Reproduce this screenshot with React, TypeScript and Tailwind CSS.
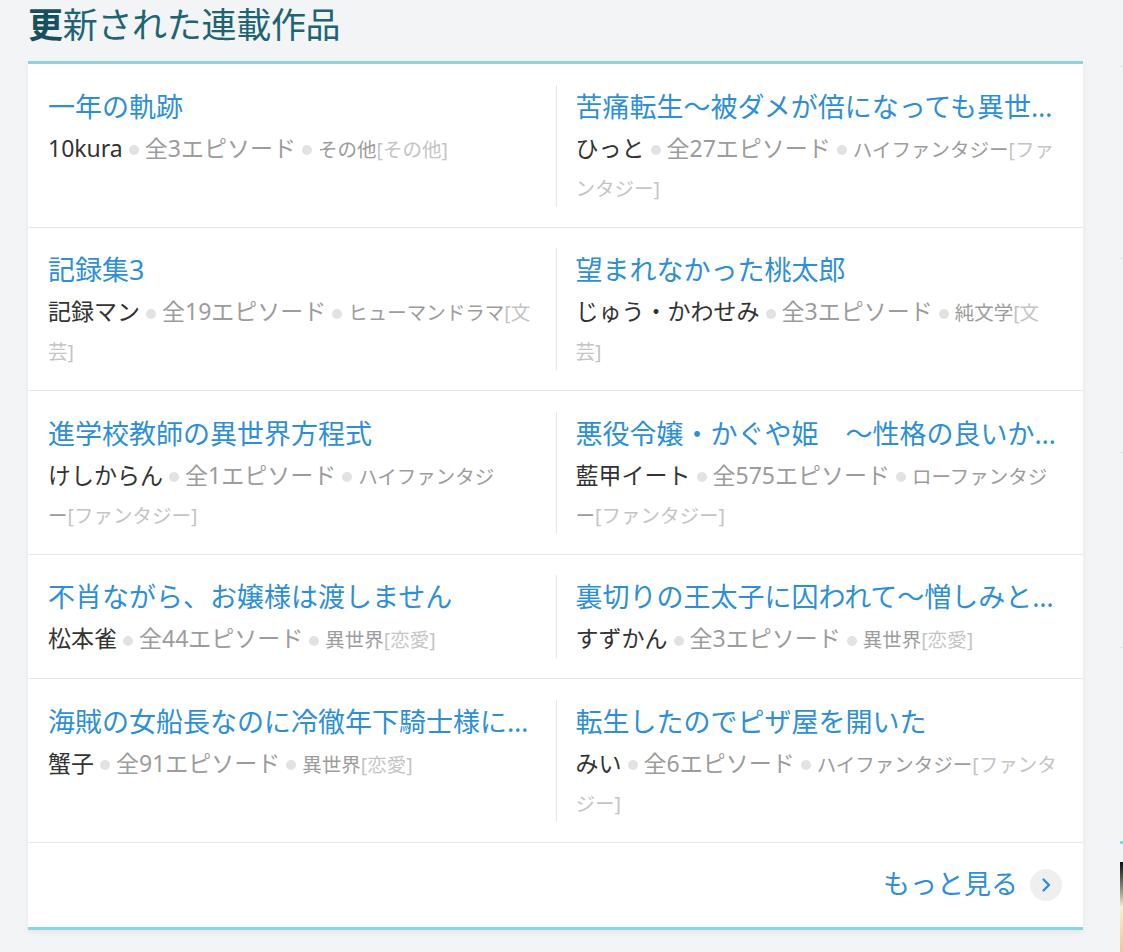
import React from 'react'

type Work = { title: string; author: string; episodes: number; genre: string; category: string }

const works: Work[] = [
  { title: '一年の軌跡', author: '10kura', episodes: 3, genre: 'その他', category: 'その他' },
  { title: '苦痛転生～被ダメが倍になっても異世界で生き抜きます～', author: 'ひっと', episodes: 27, genre: 'ハイファンタジー', category: 'ファンタジー' },
  { title: '記録集3', author: '記録マン', episodes: 19, genre: 'ヒューマンドラマ', category: '文芸' },
  { title: '望まれなかった桃太郎', author: 'じゅう・かわせみ', episodes: 3, genre: '純文学', category: '文芸' },
  { title: '進学校教師の異世界方程式', author: 'けしからん', episodes: 1, genre: 'ハイファンタジー', category: 'ファンタジー' },
  { title: '悪役令嬢・かぐや姫　～性格の良いかぐや姫の物語～', author: '藍甲イート', episodes: 575, genre: 'ローファンタジー', category: 'ファンタジー' },
  { title: '不肖ながら、お嬢様は渡しません', author: '松本雀', episodes: 44, genre: '異世界', category: '恋愛' },
  { title: '裏切りの王太子に囚われて～憎しみと愛の狭間で～', author: 'すずかん', episodes: 3, genre: '異世界', category: '恋愛' },
  { title: '海賊の女船長なのに冷徹年下騎士様に溺愛されています', author: '蟹子', episodes: 91, genre: '異世界', category: '恋愛' },
  { title: '転生したのでピザ屋を開いた', author: 'みい', episodes: 6, genre: 'ハイファンタジー', category: 'ファンタジー' }
]

const Dot = () => <span className="inline-block w-[10px] h-[10px] rounded-full bg-[#e2e2e2] mx-[6px] align-middle" />

function Cell({ w, right }: { w: Work; right?: boolean }) {
  // genre + "[" + category: the last genre char, the bracket and the first category char stay together
  const g = w.genre
  const c = w.category
  return (
    <div className={'flex-1 min-w-0 px-5 ' + (right ? 'border-l border-[#e6e6e6] pl-[19px]' : '')}>
      <div className="text-[27px] leading-[44px] text-[#2e8fd9] truncate">{w.title}</div>
      <div className="text-[23px] leading-[39px] break-all">
        <span className="text-[#333333]">{w.author}</span>
        <Dot />
        <span className="text-[#9c9c9c]">全{w.episodes}エピソード</span>
        <Dot />
        <span className="text-[19.5px] leading-none text-[#9c9c9c]">{g.slice(0, -1)}</span>
        <span className="text-[19.5px] leading-none whitespace-nowrap">
          <span className="text-[#9c9c9c]">{g.slice(-1)}</span>
          <span className="text-[#c4c4c4]">[{c.slice(0, 1)}</span>
        </span>
        <span className="text-[19.5px] leading-none text-[#c4c4c4]">{c.slice(1)}]</span>
      </div>
    </div>
  )
}

export default function App() {
  const rows: Work[][] = []
  for (let i = 0; i < works.length; i += 2) rows.push(works.slice(i, i + 2))

  return (
    <div className="w-full h-[952px] overflow-hidden bg-[#f2f4f6] flex" style={{ fontFamily: '"Noto Sans", "Noto Sans CJK JP", sans-serif' }}>
      <div className="ml-[28px] w-[1055px] shrink-0">
        <h2 className="text-[35px] leading-[50px] text-[#1f6472] mb-[11px] tracking-[-0.3px]">
          <span className="font-bold text-[#17505c]">更</span>新された連載作品
        </h2>
        <div className="bg-white border-t-[3px] border-b-[3px] border-[#8fd3dd] shadow-[0_3px_6px_rgba(0,0,0,0.06)]">
          {rows.map((r, i) => (
            <div key={i} className="flex pt-[20.5px] pb-5 border-b border-[#e6e6e6]">
              <Cell w={r[0]} />
              <Cell w={r[1]} right />
            </div>
          ))}
          <div className="h-[84px] flex items-center justify-end pr-[21px]">
            <span className="text-[27px] text-[#2e8fd9] mr-3">もっと見る</span>
            <span className="w-8 h-8 rounded-full bg-[#efefef] flex items-center justify-center">
              <svg width="16" height="16" viewBox="0 0 16 16" fill="none">
                <path d="M5.5 2.5 L11 8 L5.5 13.5" stroke="#2e8fd9" strokeWidth="2.4" strokeLinecap="round" strokeLinejoin="round" />
              </svg>
            </span>
          </div>
        </div>
      </div>
      <div className="ml-[37px] w-[300px] shrink-0 flex flex-col">
        <div className="h-[66px]" />
        <div className="h-[192px] border-t border-[#e2e2e2]" />
        <div className="h-[194px] border-t border-[#e2e2e2]" />
        <div className="h-[195px] border-t border-[#e2e2e2]" />
        <div className="h-[194px] border-t border-[#e2e2e2]" />
        <div className="h-[3px] bg-[#8fd3dd] w-[3px]" />
        <div className="h-[18px]" />
        <div className="flex-1 bg-gradient-to-b from-[#111] via-[#f9f0d0] to-[#f2c39a]" />
      </div>
    </div>
  )
}
